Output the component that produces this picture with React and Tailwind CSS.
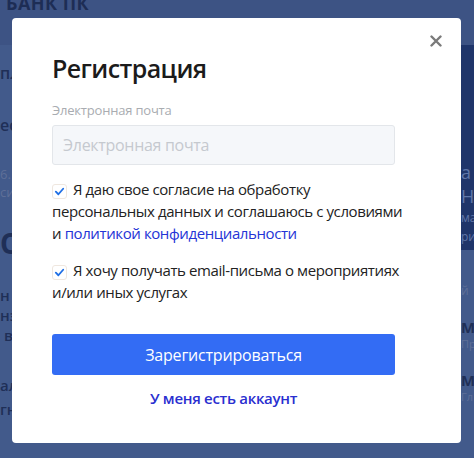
import React from 'react';

const Check = () => (
    <span className="inline-flex items-center justify-center w-[15px] h-[15px] mr-[6px] align-[-2px] rounded-[3px] border border-[#efe7df] bg-white">
        <svg viewBox="0 0 12 12" className="w-[11px] h-[11px]">
            <path d="M2 6.2 L4.8 9 L10 3" fill="none" stroke="#1f6fe5" strokeWidth="2" strokeLinecap="round" strokeLinejoin="round" />
        </svg>
    </span>
);

const App = () => {
    return (
        <div className="relative w-[474px] h-[458px] overflow-hidden bg-[#425a8b] font-['Open_Sans',sans-serif]">
            {/* dimmed page behind the dialog */}
            <header className="h-[45px] bg-[#3d5384] px-[6px] flex items-start">
                <span className="text-[18px] font-bold text-[#1d2d55] leading-none -mt-[6px] tracking-wide">БАНК ПК</span>
            </header>
            <div className="flex">
                <div className="flex-1 flex flex-col text-[#1f2f57] pt-[16px] gap-[28px]">
                    <span className="text-[16px] font-semibold">пл</span>
                    <span className="text-[16px] font-semibold">ес</span>
                    <div className="flex flex-col text-[#5e6f98] text-[13px] leading-[18px]">
                        <span>6.</span>
                        <span>си</span>
                    </div>
                    <span className="text-[28px] font-bold leading-none">О</span>
                    <div className="flex flex-col text-[15px] leading-[20px] font-semibold">
                        <span>н</span>
                        <span>нэ</span>
                        <span>&nbsp;в</span>
                    </div>
                    <div className="flex flex-col text-[15px] leading-[24px] font-semibold">
                        <span>ал</span>
                        <span>гн</span>
                    </div>
                </div>
                <div className="w-[13px] flex flex-col">
                    <div className="h-[205px] bg-[#1f356a] text-[#5f76a8] pt-[116px] flex flex-col gap-[2px] overflow-hidden whitespace-nowrap">
                        <span className="text-[18px] leading-[22px]">а</span>
                        <span className="text-[18px] leading-[22px]">Н</span>
                        <span className="text-[12px] leading-[17px]">ма</span>
                        <span className="text-[12px] leading-[17px]">ри</span>
                    </div>
                    <div className="flex flex-col pt-[32px] whitespace-nowrap overflow-hidden text-[#1f2f57]">
                        <span className="text-[12px] text-[#5e6f98]">й</span>
                        <span className="text-[15px] font-bold mt-[18px] leading-[18px]">М</span>
                        <span className="text-[11px] text-[#5e6f98]">Пр</span>
                        <span className="text-[15px] font-bold mt-[18px] leading-[18px]">М</span>
                        <span className="text-[11px] text-[#5e6f98]">Гл</span>
                    </div>
                </div>
            </div>

            {/* dialog */}
            <div className="absolute left-[12px] top-[18px] w-[449px] h-[425px] bg-white rounded-[4px] px-[40px] pt-[34px]">
                <button className="absolute right-[15px] top-[13px] w-[20px] h-[20px] flex items-center justify-center">
                    <svg viewBox="0 0 12 12" className="w-[12px] h-[12px]">
                        <path d="M1.5 1.5 L10.5 10.5 M10.5 1.5 L1.5 10.5" stroke="#7a7a7a" strokeWidth="2.4" strokeLinecap="round" />
                    </svg>
                </button>
                <h2 className="text-[25px] leading-[32px] font-semibold tracking-[-0.6px] text-[#1b1b1b]">Регистрация</h2>
                <label className="block mt-[17px] text-[13px] leading-[18px] tracking-[-0.2px] text-[#a9acb1]">Электронная почта</label>
                <div className="mt-[6px] w-[343px] h-[40px] bg-[#f5f7fa] border border-[#e3e6ea] rounded-[3px] flex items-center px-[10px]">
                    <span className="text-[16px] tracking-[-0.3px] text-[#c5c9cf]">Электронная почта</span>
                </div>
                <p className="mt-[13px] w-[362px] text-[15px] leading-[22px] tracking-[-0.4px] text-[#222]">
                    <Check />Я даю свое согласие на обработку<br />персональных данных и соглашаюсь с условиями<br />и{' '}
                    <a className="text-[#2434d6]">политикой конфиденциальности</a>
                </p>
                <p className="mt-[15px] w-[362px] text-[15px] leading-[22px] tracking-[-0.4px] text-[#222]">
                    <Check />Я хочу получать email-письма о мероприятиях<br />и/или иных услугах
                </p>
                <button className="mt-[31px] w-[343px] h-[41px] bg-[#336cf4] rounded-[3px] text-white text-[16px] tracking-[-0.2px]">
                    Зарегистрироваться
                </button>
                <div className="mt-[12px] w-[343px] text-center text-[15px] leading-[22px] font-semibold tracking-[-0.3px] text-[#2a2fd0]">У меня есть аккаунт</div>
            </div>
        </div>
    );
};

export default App;
